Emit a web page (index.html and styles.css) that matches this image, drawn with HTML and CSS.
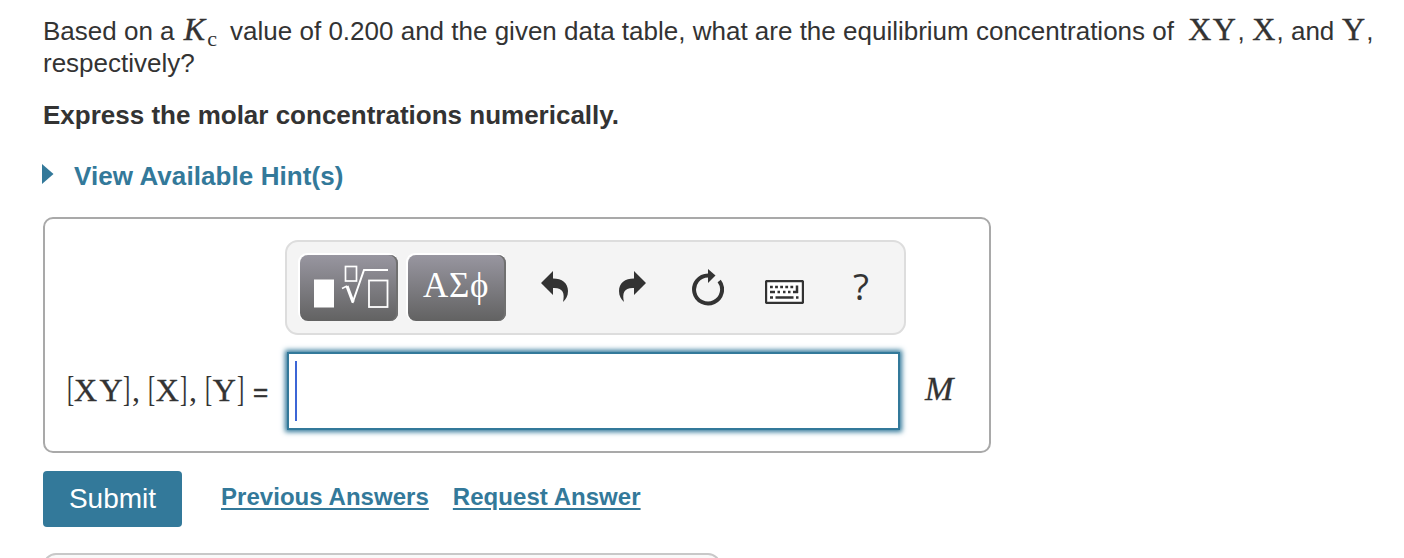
FILE: index.html
```html
<!DOCTYPE html>
<html lang="en">
<head>
  <meta charset="UTF-8">
  <title>Equilibrium Concentrations</title>
  <link rel="stylesheet" href="styles.css">
</head>
<body>

  <p class="question">Based on a <span class="math kc"><i>K</i><span class="sub">c</span></span> value of 0.200 and the given data table, what are the equilibrium concentrations of <span class="math xy">XY</span>, <span class="math x">X</span>, and <span class="math x">Y</span>,<br>respectively?</p>

  <p class="instruction">Express the molar concentrations numerically.</p>

  <div class="hint">
    <svg width="12" height="20" viewBox="0 0 12 20"><path d="M0 0L11.5 10L0 20Z" fill="#33799a"/></svg>
    <span>View Available Hint(s)</span>
  </div>

  <div class="answer-box">
    <div class="toolbar">
      <button class="btn-tool">
        <svg width="98" height="66" viewBox="0 0 98 66" fill="none" stroke="#fff">
          <rect x="14" y="24.500" width="20" height="28" fill="#fff" stroke="none"/>
          <rect x="45.500" y="11.500" width="11" height="14.500" stroke-width="1.7"/>
          <path d="M42 33.500L47 31" stroke-width="1.8"/>
          <path d="M47 31L53 47" stroke-width="3.2"/>
          <path d="M52.500 48L64 15H88" stroke-width="2"/>
          <rect x="69" y="25.500" width="18.500" height="26.500" stroke-width="1.8"/>
        </svg>
      </button>
      <button class="btn-tool greek">ΑΣϕ</button>
      <svg class="icon undo" width="28" height="32" viewBox="0 0 28 32"><path d="M0 12L12 0V7.500C21 7.500 27 12 27 20C27 25 25 28 22 31C24 22 22 16.500 12 17V24Z"/></svg>
      <svg class="icon redo" width="28" height="32" viewBox="0 0 28 32"><path d="M28 12L16 0V7.500C7 7.500 1 12 1 20C1 25 3 28 6 31C4 22 6 16.500 16 17V24Z"/></svg>
      <svg class="icon reset" width="32" height="37" viewBox="0 0 32 37"><path d="M27.200 12A14 14 0 1 1 16 6.500" fill="none" stroke="#333" stroke-width="4"/><path d="M16 0L23.500 6.500L16 14Z"/></svg>
      <svg class="icon keys" width="39" height="24" viewBox="0 0 39 24">
        <rect x="1" y="1" width="37" height="22" rx="1.500" fill="#fff" stroke="#333" stroke-width="2.4"/>
        <path d="M5 7H29" stroke="#333" stroke-width="2.600" stroke-dasharray="2.800 2.300"/>
        <path d="M5 12H10M12.500 12H15M18 12H20.500M23 12H25.500M28 12H33M32 5.500V13" fill="none" stroke="#333" stroke-width="2.500"/>
        <path d="M5 17.500H8M10.500 17.500H28.500M31 17.500H33.500" stroke="#333" stroke-width="2.500"/>
      </svg>
      <span class="help">?</span>
    </div>

    <div class="label">
      <span class="br">[</span><span class="sym pair">XY</span><span class="br">]</span><span class="comma">,</span>
      <span class="br">[</span><span class="sym">X</span><span class="br">]</span><span class="comma">,</span>
      <span class="br">[</span><span class="sym">Y</span><span class="br">]</span><span class="equals">=</span>
    </div>
    <div class="field"><span class="cursor"></span></div>
    <div class="unit">M</div>
  </div>

  <div class="actions">
    <button class="btn-submit">Submit</button>
    <a class="previous" href="#">Previous Answers</a>
    <a class="request" href="#">Request Answer</a>
  </div>

  <div class="feedback-clip">
    <div class="feedback"></div>
  </div>

</body>
</html>
```

FILE: styles.css
```css
body {
  margin: 0;
  padding: 15px 0 0 43px;
  height: 558px;
  box-sizing: border-box;
  overflow: hidden;
  background: #fff;
  color: #333;
  font-family: "Liberation Sans", Arial, sans-serif;
  font-size: 26px;
  line-height: 32px;
}
p {
  margin: 0;
  white-space: nowrap;
}
.math {
  font-family: "Liberation Serif", "Times New Roman", serif;
  font-size: 32px;
  line-height: 0;
  -webkit-text-stroke: 0.4px #333;
}
.kc {
  margin: 0 6px 0 2px;
}
.kc i {
  margin-right: 2px;
}
.sub {
  font-size: 22px;
  vertical-align: -6px;
  -webkit-text-stroke: 0;
}
.xy {
  margin-left: 7px;
  letter-spacing: 1.5px;
}
.x {
  margin: 0 1px 0 0.5px;
}
.instruction {
  margin-top: 20px;
  font-weight: bold;
}
.hint {
  display: flex;
  align-items: center;
  margin-top: 29px;
  color: #33799a;
  font-weight: bold;
}
.hint svg {
  margin: -5px 20px 0 -1px;
}
.hint span {
  letter-spacing: 0.08px;
}
.answer-box {
  display: grid;
  grid-template-columns: 240px 621px 1fr;
  grid-template-rows: 95px 78px;
  row-gap: 17px;
  box-sizing: border-box;
  width: 948px;
  height: 236px;
  margin-top: 25px;
  padding-top: 21px;
  border: 2px solid #a9a9a9;
  border-radius: 10px;
}
.toolbar {
  grid-column: 2;
  display: flex;
  align-items: flex-start;
  box-sizing: border-box;
  padding: 13px 0 0 13px;
  background: #f4f4f4;
  border: 2px solid #ddd;
  border-radius: 13px;
}
.btn-tool {
  width: 98px;
  height: 66px;
  margin-right: 10px;
  padding: 0;
  border: none;
  border-radius: 8px;
  background: linear-gradient(#9896a0, #626262);
  box-shadow: -1px -1px 0 1px #fff, inset -2px 0 0 #707070;
  color: #fff;
}
.btn-tool svg {
  display: block;
}
.greek {
  padding: 0 2px 5px 0;
  font-family: "Liberation Serif", "Times New Roman", serif;
  font-size: 35px;
  letter-spacing: 0.7px;
}
.icon {
  fill: #333;
}
.undo {
  margin: 16px 0 0 25px;
}
.redo {
  margin: 16px 0 0 49px;
}
.reset {
  margin: 14px 0 0 46px;
}
.keys {
  margin: 25px 0 0 41px;
}
.help {
  margin: 15px 0 0 49px;
  font-family: "Open Sans", sans-serif;
  font-size: 37px;
}
.label {
  grid-column: 1;
  display: flex;
  align-items: baseline;
  padding: 22px 0 0 22px;
  font-family: "Liberation Serif", "Times New Roman", serif;
  font-size: 32px;
}
.br {
  width: 7px;
  font-size: 36px;
  line-height: 0;
  transform: scaleX(0.6);
  transform-origin: left;
}
.sym {
  width: 25.5px;
  text-align: center;
  -webkit-text-stroke: 0.4px #333;
}
.pair {
  width: 49px;
  letter-spacing: 2.5px;
}
.comma {
  width: 15.5px;
  padding-left: 2px;
}
.equals {
  margin-left: 9px;
  font-family: "Liberation Sans", Arial, sans-serif;
  font-size: 26px;
  -webkit-text-stroke: 0.5px #333;
}
.field {
  box-sizing: border-box;
  width: 613px;
  padding: 7px;
  margin-left: 2px;
  border: 2px solid #33799a;
  box-shadow: 0 0 5px 2px #33799a;
}
.cursor {
  display: block;
  width: 2px;
  height: 60px;
  margin-left: -1px;
  background: #3c66d6;
}
.unit {
  padding: 21px 0 0 19px;
  font-family: "Liberation Serif", "Times New Roman", serif;
  font-size: 34px;
  font-style: italic;
  -webkit-text-stroke: 0.3px #333;
}
.actions {
  display: flex;
  margin-top: 18px;
}
.btn-submit {
  width: 139px;
  height: 56px;
  padding: 0;
  border: none;
  border-radius: 4px;
  background: #33799a;
  color: #fff;
  font-family: inherit;
  font-size: 28px;
}
.actions a {
  margin-top: 10px;
  color: #33799a;
  font-size: 24px;
  font-weight: bold;
  letter-spacing: 0.04px;
  text-decoration-thickness: 1.5px;
  text-underline-offset: 3px;
}
.previous {
  margin-left: 39px;
}
.request {
  margin-left: 24px;
}
.feedback-clip {
  height: 5px;
  margin-top: 26px;
  overflow: hidden;
}
.feedback {
  box-sizing: border-box;
  width: 678px;
  height: 40px;
  border: 2px solid #c8c8c8;
  border-radius: 13px;
  background: #f9f9f9;
}
```
